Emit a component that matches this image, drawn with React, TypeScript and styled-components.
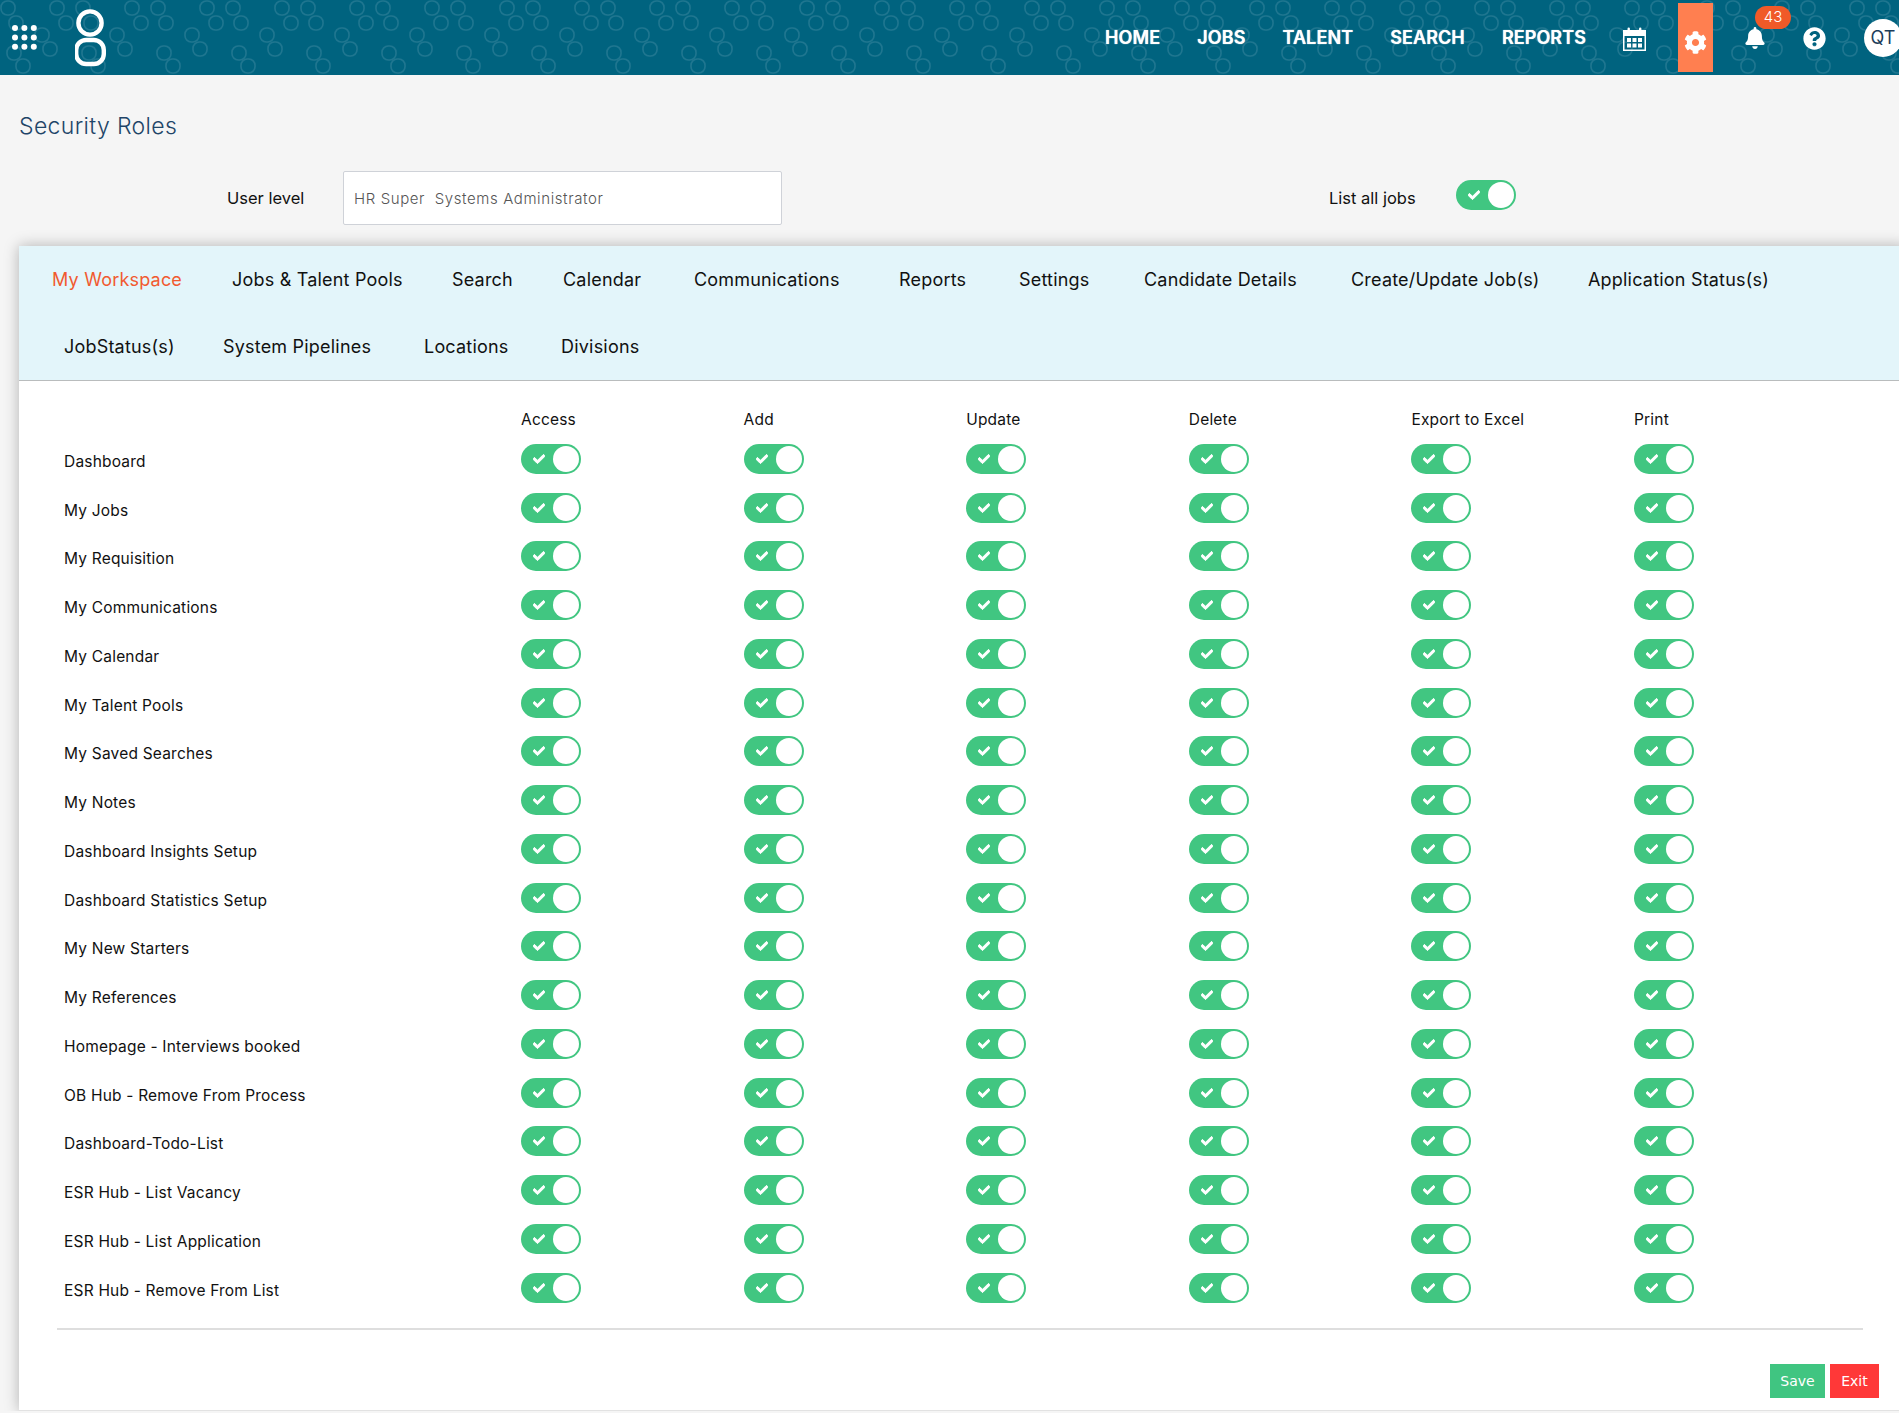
import { createGlobalStyle, styled } from 'styled-components'
import { FaBell, FaCheck, FaCog, FaQuestionCircle } from 'react-icons/fa'

const ring = (x: number, y: number) =>
  `<rect x='${x - 7}' y='${y - 7}' width='14' height='14' rx='6.2' fill='none' stroke='%231f7690' stroke-width='1.6'/>`

const tile = [
  [8, 8], [16, 23], [57, 8], [66, 23], [42, 35], [50, 49], [14, 53], [23, 66],
]
  .map(([x, y]) => ring(x, y))
  .join('')

const pattern = `url("data:image/svg+xml,<svg xmlns='http://www.w3.org/2000/svg' width='75' height='75'>${tile}</svg>")`

const GlobalStyle = createGlobalStyle`
  html, body {
    margin: 0;
    background: #f5f5f5;
    overflow-x: hidden;
  }
  body {
    font-family: Inter, "Open Sans", sans-serif;
    color: #111;
  }
`

const Page = styled.div`
  width: 1899px;
  overflow: hidden;
`

const Header = styled.header`
  display: flex;
  align-items: center;
  height: 75px;
  background-color: #00637f;
  background-image: ${pattern};
  color: #fff;
`

const AppsIcon = styled.svg`
  width: 25px;
  height: 25px;
  margin: -1px 0 0 12px;
  fill: #fff;
`

const Logo = styled.svg`
  width: 32px;
  height: 58px;
  margin: 0 0 0 38px;
`

const Nav = styled.nav`
  display: flex;
  gap: 37px;
  margin-left: auto;
  font-size: 18px;
  font-weight: 600;
  letter-spacing: 0.1px;
  text-shadow: 0 0 1px #fff;
`

const CalendarIcon = styled.svg`
  width: 23px;
  height: 24px;
  margin: 2px 32px 0 37px;
`

const GearBox = styled.div`
  display: flex;
  justify-content: center;
  align-items: center;
  width: 35px;
  height: 69px;
  padding-top: 9px;
  box-sizing: border-box;
  margin-right: 32px;
  background: #ff7f50;
  font-size: 23px;
`

const BellWrap = styled.div`
  position: relative;
  display: flex;
  width: 20px;
  margin-right: 38px;
  font-size: 22px;
`

const Badge = styled.span`
  position: absolute;
  top: -21px;
  left: 10px;
  width: 36px;
  height: 23px;
  border-radius: 12px;
  background: #f05a28;
  font-size: 15px;
  font-weight: 300;
  line-height: 22px;
  text-align: center;
`

const HelpWrap = styled.div`
  display: flex;
  margin: 1px 38px 0 0;
  font-size: 23px;
`

const Avatar = styled.div`
  flex: none;
  width: 38px;
  height: 38px;
  margin-right: -3px;
  border-radius: 50%;
  background: #fff;
  color: #1c3d5a;
  font-size: 18px;
  line-height: 38px;
  text-align: center;
`

const Title = styled.h1`
  margin: 36px 0 0 19px;
  color: #1f4568;
  font-size: 23px;
  font-weight: 300;
  letter-spacing: 0.35px;
  line-height: 30px;
`

const FilterRow = styled.div`
  display: flex;
  align-items: center;
  height: 54px;
  margin-top: 30px;
  padding-left: 227px;
  font-size: 16.5px;
`

const FilterLabel = styled.label<{ $width: number }>`
  width: ${({ $width }) => $width}px;
  flex: none;
`

const LevelInput = styled.input`
  width: 439px;
  height: 54px;
  box-sizing: border-box;
  margin-right: 547px;
  padding: 0 10px;
  border: 1px solid #cfd2d8;
  border-radius: 2px;
  background: #fff;
  color: #555;
  font-family: inherit;
  font-size: 15px;
  font-weight: 300;
  letter-spacing: 0.6px;
`

const Card = styled.section`
  margin: 21px -8px 0 19px;
  background: #fff;
  border-bottom: 1px solid #e2e2e2;
  box-shadow: 0 0 14px rgba(0, 0, 0, 0.28);
`

const TabBar = styled.div`
  height: 134px;
  background: #e3f5fa;
  border-bottom: 1px solid #b9bcbd;
`

const TabRow = styled.div<{ $indent: number }>`
  display: flex;
  align-items: center;
  height: 67px;
  padding-left: ${({ $indent }) => $indent}px;
  font-size: 18px;
  letter-spacing: 0.2px;
`

const Tab = styled.span<{ $active?: boolean; $width: number }>`
  flex: none;
  width: ${({ $width }) => $width}px;
  white-space: nowrap;
  color: ${({ $active }) => ($active ? '#f15a30' : '#111')};
`

const Matrix = styled.div`
  display: grid;
  grid-template-columns: 457px repeat(6, 222.6px);
  grid-template-rows: 30.6px;
  grid-auto-rows: 48.76px;
  align-items: center;
  margin: 23px 0 0 45px;
  font-size: 15.5px;
  letter-spacing: 0.2px;
`

const HeadCell = styled.div`
  line-height: 32px;
  align-self: start;
`

const RowLabel = styled.div`
  padding-top: 5px;
`

const Toggle = styled.span`
  display: inline-flex;
  align-items: center;
  justify-content: space-between;
  flex: none;
  width: 60px;
  height: 30px;
  box-sizing: border-box;
  padding: 0 2px 0 12px;
  border-radius: 15px;
  background: #41c681;
  color: #fff;
  font-size: 12px;

  svg {
    stroke: #fff;
    stroke-width: 40;
  }

  &::after {
    content: '';
    width: 26px;
    height: 26px;
    border-radius: 50%;
    background: #fff;
  }
`

const ListToggle = styled(Toggle)`
  margin-bottom: 6px;
`

const Divider = styled.hr`
  height: 2px;
  margin: 16px 0 0 38px;
  width: 1806px;
  border: 0;
  background: #dedede;
`

const Actions = styled.div`
  display: flex;
  justify-content: flex-end;
  gap: 5px;
  width: 1860px;
  padding: 34px 0 12px;
`

const ActionButton = styled.button<{ $kind: 'save' | 'exit' }>`
  width: ${({ $kind }) => ($kind === 'save' ? 55 : 49)}px;
  height: 34px;
  padding: 0;
  border: 0;
  background: ${({ $kind }) => ($kind === 'save' ? '#40c581' : '#ff3838')};
  color: #fff;
  font-family: 'DejaVu Sans', sans-serif;
  font-size: 14px;
`

const navLinks = ['HOME', 'JOBS', 'TALENT', 'SEARCH', 'REPORTS']
const tabsTop = [
  { label: 'My Workspace', width: 180 },
  { label: 'Jobs & Talent Pools', width: 220 },
  { label: 'Search', width: 111 },
  { label: 'Calendar', width: 131 },
  { label: 'Communications', width: 205 },
  { label: 'Reports', width: 120 },
  { label: 'Settings', width: 125 },
  { label: 'Candidate Details', width: 207 },
  { label: 'Create/Update Job(s)', width: 237 },
  { label: 'Application Status(s)', width: 200 },
]
const tabsBottom = [
  { label: 'JobStatus(s)', width: 159 },
  { label: 'System Pipelines', width: 201 },
  { label: 'Locations', width: 137 },
  { label: 'Divisions', width: 120 },
]
const columns = ['Access', 'Add', 'Update', 'Delete', 'Export to Excel', 'Print']
const rows = [
  'Dashboard',
  'My Jobs',
  'My Requisition',
  'My Communications',
  'My Calendar',
  'My Talent Pools',
  'My Saved Searches',
  'My Notes',
  'Dashboard Insights Setup',
  'Dashboard Statistics Setup',
  'My New Starters',
  'My References',
  'Homepage - Interviews booked',
  'OB Hub - Remove From Process',
  'Dashboard-Todo-List',
  'ESR Hub - List Vacancy',
  'ESR Hub - List Application',
  'ESR Hub - Remove From List',
]

const App = () => (
  <Page>
    <GlobalStyle />
    <Header>
      <AppsIcon viewBox="0 0 25 25">
        {[0, 1, 2].flatMap((r) =>
          [0, 1, 2].map((c) => <circle key={`${r}${c}`} cx={3 + c * 9.4} cy={3 + r * 9.4} r={3} />),
        )}
      </AppsIcon>
      <Logo viewBox="0 0 32 58" fill="none" stroke="#fff" strokeWidth="4.4">
        <circle cx="15" cy="14" r="11.6" />
        <rect x="1.2" y="31" width="27.6" height="24" rx="10" />
      </Logo>
      <Nav>
        {navLinks.map((link) => (
          <span key={link}>{link}</span>
        ))}
      </Nav>
      <CalendarIcon viewBox="0 0 23 24" fill="#fff">
        <path d="M0 3h23v21H0zM1.5 9v13.5h20V9z" fillRule="evenodd" />
        <rect x="4.5" y="0.5" width="2.4" height="5" rx="1.2" />
        <rect x="16" y="0.5" width="2.4" height="5" rx="1.2" />
        <rect x="4" y="11" width="4" height="4" />
        <rect x="9.5" y="11" width="4" height="4" />
        <rect x="15" y="11" width="4" height="4" />
        <rect x="4" y="16.5" width="4" height="4" />
        <rect x="9.5" y="16.5" width="4" height="4" />
        <rect x="15" y="16.5" width="4" height="4" />
      </CalendarIcon>
      <GearBox>
        <FaCog />
      </GearBox>
      <BellWrap>
        <FaBell />
        <Badge>43</Badge>
      </BellWrap>
      <HelpWrap>
        <FaQuestionCircle />
      </HelpWrap>
      <Avatar>QT</Avatar>
    </Header>

    <Title>Security Roles</Title>

    <FilterRow>
      <FilterLabel $width={116}>User level</FilterLabel>
      <LevelInput readOnly value="HR Super  Systems Administrator" />
      <FilterLabel $width={127}>List all jobs</FilterLabel>
      <ListToggle>
        <FaCheck />
      </ListToggle>
    </FilterRow>

    <Card>
      <TabBar>
        <TabRow $indent={33}>
          {tabsTop.map((tab, i) => (
            <Tab key={tab.label} $active={i === 0} $width={tab.width}>
              {tab.label}
            </Tab>
          ))}
        </TabRow>
        <TabRow $indent={45}>
          {tabsBottom.map((tab) => (
            <Tab key={tab.label} $width={tab.width}>
              {tab.label}
            </Tab>
          ))}
        </TabRow>
      </TabBar>

      <Matrix>
        <HeadCell />
        {columns.map((col) => (
          <HeadCell key={col}>{col}</HeadCell>
        ))}
        {rows.map((row) => [
          <RowLabel key={row}>{row}</RowLabel>,
          ...columns.map((col) => (
            <Toggle key={row + col}>
              <FaCheck />
            </Toggle>
          )),
        ])}
      </Matrix>

      <Divider />
      <Actions>
        <ActionButton $kind="save">Save</ActionButton>
        <ActionButton $kind="exit">Exit</ActionButton>
      </Actions>
    </Card>
  </Page>
)

export default App
